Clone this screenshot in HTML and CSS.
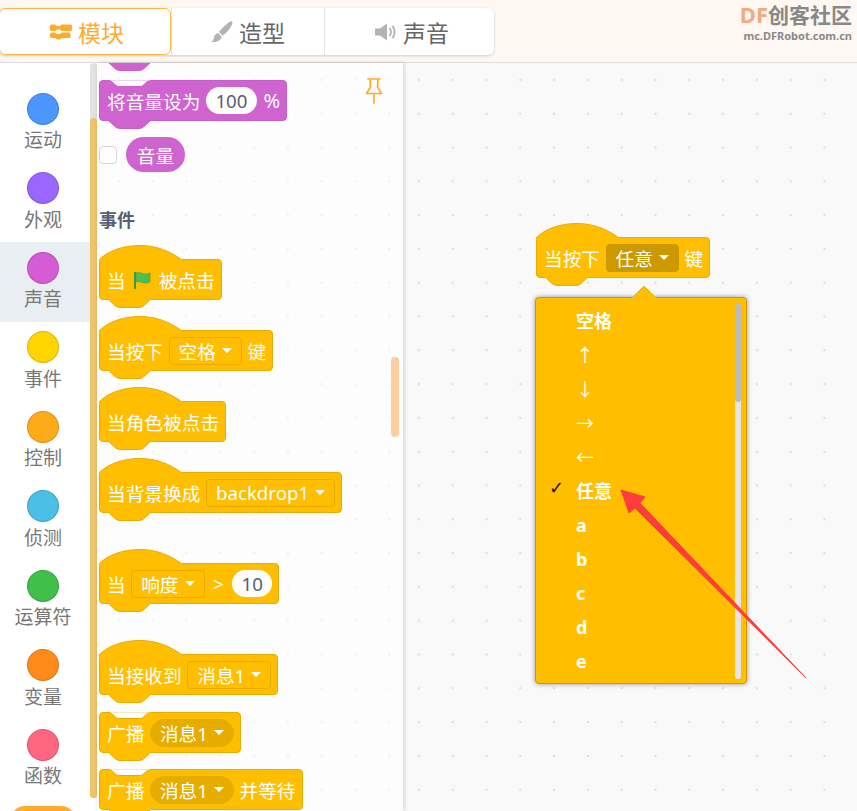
FILE: index.html
```html
<!DOCTYPE html>
<html lang="en">
<head>
    <meta charset="UTF-8">
    <meta name="viewport" content="width=device-width, initial-scale=1.0">
    <title>模块</title>
    <link rel="stylesheet" href="styles.css">
</head>
<body>
    <!-- shared block pieces -->
    <svg class="defs" width="0" height="0">
        <symbol id="hat" viewBox="0 0 84 16">
            <path d="M.5 16V14.5C9 6 24 .5 41 .5 57 .5 71 6 83 15V16Z" fill="#ffbf00" stroke="#e6ac00"/>
            <path d="M1 16V14.5H83V16Z" fill="#ffbf00"/>
        </symbol>
        <symbol id="bump" viewBox="0 0 44 9">
            <path d="M0 0 7 6.5Q9 8.5 12 8.5H31Q34 8.5 36 6.5L43 0Z" fill="#ffbf00" stroke="#e6ac00"/>
            <path d="M1 0H42V1H1Z" fill="#ffbf00"/>
        </symbol>
        <symbol id="bump-purple" viewBox="0 0 44 9">
            <path d="M0 0 7 6.5Q9 8.5 12 8.5H31Q34 8.5 36 6.5L43 0Z" fill="#cf63cf" stroke="#c85cc8"/>
            <path d="M1 0H42V1H1Z" fill="#cf63cf"/>
        </symbol>
        <symbol id="notch" viewBox="0 0 44 7">
            <path d="M0 0 6 5.5Q7 6.5 9 6.5H30Q32 6.5 33 5.5L39 0Z" fill="#fdfdfd" stroke="#e6ac00"/>
            <path d="M-1-1H40V.5H-1Z" fill="#fdfdfd"/>
        </symbol>
        <symbol id="notch-purple" viewBox="0 0 44 7">
            <path d="M0 0 6 5.5Q7 6.5 9 6.5H30Q32 6.5 33 5.5L39 0Z" fill="#fdfdfd" stroke="#c85cc8"/>
            <path d="M-1-1H40V.5H-1Z" fill="#fdfdfd"/>
        </symbol>
    </svg>

    <div class="page">
        <header class="topbar">
            <nav class="tabs">
                <div class="tab tab-active">
                    <svg class="tab-icon" viewBox="0 0 22 15"><path d="M0 1.5Q0 0 1.500 0H5L6.500 1.500H10L11.500 0H20.500Q22 0 22 1.500V5Q22 6.500 20.500 6.500H11.500L10 5H7L5.500 6.500H1.500Q0 6.500 0 5ZM1.500 8H5L6.500 9.500H10L11.500 8H19Q20.500 8 20.500 9.500V12Q20.500 13.500 19 13.500H11.500L10 15H7L5.500 13.500H1.500Q0 13.500 0 12V9.500Q0 8 1.500 8Z" fill="#ffab2e"/></svg>
                    <span>模块</span>
                </div>
                <div class="tab">
                    <svg class="tab-icon" viewBox="0 0 22 22"><path d="M21 .5C22 1 21.500 3 20 5.500 18 9 14.500 13 11.500 14.500L8 11C10 8 13.500 4.500 16.500 2.500 18.500 1 20.200 0 21 .5ZM7 12 10.500 15.500C10 19 6.500 21.500 0 21 2.500 19.500 2.500 18.500 3 16.500 3.500 14 5 12.500 7 12Z" fill="#b3b3b3"/></svg>
                    <span>造型</span>
                </div>
                <div class="tab">
                    <svg class="tab-icon" viewBox="0 0 22 17"><path d="M0 5H5L12 0V17L5 12H0Z" fill="#b3b3b3"/><path d="M15 5Q17 8.500 15 12M18 3Q21 8.500 18 14" fill="none" stroke="#b3b3b3" stroke-width="1.800" stroke-linecap="round"/></svg>
                    <span>声音</span>
                </div>
            </nav>
            <div class="logo">
                <div class="logo-name"><span class="logo-df">DF</span>创客社区</div>
                <div class="logo-url">mc.DFRobot.com.cn</div>
            </div>
        </header>

        <main class="editor">
            <aside class="categories">
                <div class="category"><i class="dot dot-motion"></i>运动</div>
                <div class="category"><i class="dot dot-looks"></i>外观</div>
                <div class="category category-on"><i class="dot dot-sound"></i>声音</div>
                <div class="category"><i class="dot dot-events"></i>事件</div>
                <div class="category"><i class="dot dot-control"></i>控制</div>
                <div class="category"><i class="dot dot-sensing"></i>侦测</div>
                <div class="category"><i class="dot dot-operators"></i>运算符</div>
                <div class="category"><i class="dot dot-variables"></i>变量</div>
                <div class="category"><i class="dot dot-functions"></i>函数</div>
                <div class="more-pill"></div>
            </aside>

            <div class="side-scroll"><div class="side-thumb"></div></div>

            <section class="flyout">
                <div class="block purple clipped">
                    <svg class="bump"><use href="#bump-purple"/></svg>
                </div>
                <div class="block purple next-block">
                    <svg class="notch"><use href="#notch-purple"/></svg>
                    将音量设为 <span class="num">100</span> <span class="percent">%</span>
                    <svg class="bump"><use href="#bump-purple"/></svg>
                </div>
                <div class="reporter-row">
                    <span class="checkbox"></span>
                    <span class="reporter">音量</span>
                </div>
                <h3 class="group-title">事件</h3>

                <div class="block hat-block first-hat">
                    <svg class="hat"><use href="#hat"/></svg>
                    当
                    <svg class="flag" viewBox="0 0 18 18"><path d="M2 1V18" stroke="#45993d" stroke-width="2"/><path d="M3 2C7 0 10 5 17 2V11C10 14 7 9 3 11Z" fill="#4cbf56" stroke="#45993d" stroke-width=".6"/></svg>
                    被点击
                    <svg class="bump"><use href="#bump"/></svg>
                </div>
                <div class="block hat-block">
                    <svg class="hat"><use href="#hat"/></svg>
                    当按下 <span class="menu">空格<i class="caret"></i></span> 键
                    <svg class="bump"><use href="#bump"/></svg>
                </div>
                <div class="block hat-block">
                    <svg class="hat"><use href="#hat"/></svg>
                    当角色被点击
                    <svg class="bump"><use href="#bump"/></svg>
                </div>
                <div class="block hat-block">
                    <svg class="hat"><use href="#hat"/></svg>
                    当背景换成 <span class="menu">backdrop1<i class="caret"></i></span>
                    <svg class="bump"><use href="#bump"/></svg>
                </div>
                <div class="block hat-block wide-gap">
                    <svg class="hat"><use href="#hat"/></svg>
                    当 <span class="menu">响度<i class="caret"></i></span> <span class="gt">&gt;</span> <span class="num num-small">10</span>
                    <svg class="bump"><use href="#bump"/></svg>
                </div>
                <div class="block hat-block wide-gap">
                    <svg class="hat"><use href="#hat"/></svg>
                    当接收到 <span class="menu">消息1<i class="caret"></i></span>
                    <svg class="bump"><use href="#bump"/></svg>
                </div>
                <div class="block next-block">
                    <svg class="notch"><use href="#notch"/></svg>
                    广播 <span class="menu menu-round">消息1<i class="caret"></i></span>
                    <svg class="bump"><use href="#bump"/></svg>
                </div>
                <div class="block next-block">
                    <svg class="notch"><use href="#notch"/></svg>
                    广播 <span class="menu menu-round">消息1<i class="caret"></i></span> 并等待
                    <svg class="bump"><use href="#bump"/></svg>
                </div>

                <svg class="pin" viewBox="0 0 18 26"><path d="M3 1H15M5 1 5.500 9 1.500 15.500H16.500L12.500 9 13 1M9 15.500V25" fill="none" stroke="#ffab2e" stroke-width="1.700" stroke-linejoin="round" stroke-linecap="round"/></svg>
                <div class="flyout-thumb"></div>
            </section>

            <section class="workspace">
                <div class="block hat-block placed">
                    <svg class="hat"><use href="#hat"/></svg>
                    当按下 <span class="menu menu-open">任意<i class="caret"></i></span> 键
                    <svg class="bump"><use href="#bump"/></svg>
                </div>

                <div class="key-menu">
                    <div class="key-list">
                        <div class="key">空格</div>
                        <div class="key key-arrow">↑</div>
                        <div class="key key-arrow">↓</div>
                        <div class="key key-arrow">→</div>
                        <div class="key key-arrow">←</div>
                        <div class="key"><span class="tick">✓</span>任意</div>
                        <div class="key">a</div>
                        <div class="key">b</div>
                        <div class="key">c</div>
                        <div class="key">d</div>
                        <div class="key">e</div>
                    </div>
                    <div class="menu-scroll"><div class="menu-thumb"></div></div>
                </div>

                <svg class="pointer" viewBox="0 0 200 200"><path d="M3 3 27 10 22 16 188 191 17 21 11 26Z" fill="#ff3d3d" stroke="#ff3d3d" stroke-width="1" stroke-linejoin="round"/></svg>
            </section>
        </main>
    </div>
</body>
</html>
```

FILE: styles.css
```css
*{
    padding: 0;
    margin: 0;
    box-sizing: border-box;
}
body{
    font-family: "Noto Sans", "Noto Sans CJK SC", sans-serif;
    overflow: hidden;
}
.defs{
    position: absolute;
}
.page{
    width: 857px;
    height: 811px;
    display: flex;
    flex-direction: column;
    overflow: hidden;
}

/* top bar */
.topbar{
    height: 63px;
    flex: none;
    background-color: #fff8f2;
    border-bottom: 1px solid #dcdcdc;
    display: flex;
    justify-content: space-between;
    padding: 8px 5px 0 0;
}
.tabs{
    display: flex;
    width: 495px;
    height: 47px;
    margin-left: -1px;
    background-color: #fff;
    border-radius: 6px;
    box-shadow: 0 1px 3px rgba(0, 0, 0, 0.18);
}
.tab{
    flex: 155px;
    display: flex;
    align-items: center;
    justify-content: center;
    gap: 6px;
    font-size: 23px;
    color: #666;
    border-left: 1px solid #e6e6e6;
}
.tab-active{
    flex: 0 0 172px;
    padding-left: 4px;
    color: #ffab2e;
    background-color: #fff;
    border: 1px solid #ffb545;
    border-radius: 6px;
}
.tab:last-child{
    flex: 0 0 170px;
    padding-left: 5px;
}
.tab-icon{
    width: 22px;
    height: 22px;
}
.logo{
    text-align: right;
    color: #888;
    font-weight: 700;
    margin-top: -7px;
}
.logo-name{
    font-size: 21px;
    line-height: 26px;
}
.logo-df{
    color: #f0ab80;
    font-size: 22px;
}
.logo-url{
    font-size: 11px;
    line-height: 15px;
}

/* category column */
.editor{
    flex: 1;
    display: flex;
    min-height: 0;
}
.categories{
    width: 90px;
    flex: none;
    background-color: #fff;
    padding-top: 20px;
    overflow: hidden;
}
.category{
    height: 79.5px;
    display: flex;
    flex-direction: column;
    align-items: center;
    padding: 9.5px 4px 0 0;
    font-size: 19px;
    line-height: 26px;
    color: #777;
}
.category-on{
    background-color: #e9eef2;
}
.dot{
    width: 32px;
    height: 32px;
    flex: none;
    border-radius: 50%;
    border: 1px solid rgba(0, 0, 0, 0.15);
    margin-bottom: 2.5px;
}
.dot-motion{ background-color: #4c97ff; }
.dot-looks{ background-color: #9966ff; }
.dot-sound{ background-color: #d65cd6; }
.dot-events{ background-color: #ffd500; }
.dot-control{ background-color: #ffab19; }
.dot-sensing{ background-color: #4cbfe6; }
.dot-operators{ background-color: #40bf4a; }
.dot-variables{ background-color: #ff8c1a; }
.dot-functions{ background-color: #ff6680; }
.more-pill{
    width: 66px;
    height: 30px;
    margin: 7px 0 0 10px;
    border-radius: 15px;
    background-color: #ffab2e;
}
.side-scroll{
    width: 7px;
    flex: none;
    background-color: #e4e2e0;
    border-radius: 4px;
    height: 735px;
}
.side-thumb{
    height: 680px;
    margin-top: 55px;
    border-radius: 4px;
    background-color: #efc36a;
}

/* block palette */
.flyout{
    width: 306px;
    flex: none;
    position: relative;
    overflow: hidden;
    padding-left: 2px;
    background-color: #fdfdfd;
    background-image: radial-gradient(circle, #f0f0f0 1px, transparent 1.2px);
    background-size: 33.8px 33.8px;
    background-position: 5px 0;
    box-shadow: 1px 0 4px rgba(0, 0, 0, 0.18);
    z-index: 1;
}
.block{
    position: relative;
    width: fit-content;
    height: 41px;
    display: flex;
    align-items: center;
    gap: 5.5px;
    padding: 0 6px 0 7px;
    font-size: 18.7px;
    color: #fff;
    white-space: nowrap;
    background-color: #ffbf00;
    border: 1px solid #e6ac00;
    border-radius: 4px;
}
.purple{
    background-color: #cf63cf;
    border-color: #c85cc8;
}
.clipped{
    width: 161px;
    margin-top: -41px;
}
.next-block{
    margin-top: 17px;
}
.hat-block{
    margin-top: 30px;
}
.first-hat{
    margin-top: 27px;
}
.wide-gap{
    margin-top: 50px;
}
.wide-gap + .next-block{
    margin-top: 17px;
}
.next-block + .next-block{
    margin-top: 16px;
}
.hat{
    position: absolute;
    left: -1px;
    top: -15px;
    width: 84px;
    height: 16px;
}
.bump{
    position: absolute;
    left: 8px;
    top: 39px;
    width: 44px;
    height: 9px;
}
.notch{
    position: absolute;
    left: 10px;
    top: -1px;
    width: 44px;
    height: 7px;
}
.num{
    height: 27px;
    min-width: 51px;
    padding: 0 8px;
    border-radius: 14px;
    background-color: #fff;
    color: #575e75;
    display: flex;
    align-items: center;
    justify-content: center;
}
.num-small{
    min-width: 40px;
}
.percent{
    margin-left: 1px;
    font-size: 20px;
}
.gt{
    margin: 0 3px;
}
.menu{
    height: 28px;
    padding: 0 9px 0 9px;
    display: flex;
    align-items: center;
    gap: 6px;
    border: 1px solid #e6ac00;
    border-radius: 4px;
}
.menu-round{
    border-radius: 14px;
    background-color: #e6ac00;
    padding: 0 9px;
}
.menu-open{
    background-color: #cc9900;
    border-color: #cc9900;
}
.caret{
    width: 0;
    height: 0;
    border: 5px solid transparent;
    border-top: 5px solid #fff;
    border-bottom: 0;
}
.flag{
    width: 18px;
    height: 18px;
    margin: 0 2px;
}
.reporter-row{
    margin-top: 16px;
    height: 35px;
    display: flex;
    align-items: center;
    gap: 9px;
}
.checkbox{
    width: 18px;
    height: 18px;
    background-color: #fff;
    border: 1px solid #d5d5d5;
    border-radius: 4px;
}
.reporter{
    width: 59px;
    height: 35px;
    border-radius: 18px;
    background-color: #cf63cf;
    color: #fff;
    font-size: 18.7px;
    display: flex;
    align-items: center;
    justify-content: center;
}
.group-title{
    margin-top: 36px;
    height: 24px;
    font-size: 18px;
    line-height: 24px;
    color: #575e75;
}
.pin{
    position: absolute;
    left: 268px;
    top: 15px;
    width: 18px;
    height: 26px;
}
.flyout-thumb{
    position: absolute;
    left: 294px;
    top: 294px;
    width: 8px;
    height: 80px;
    border-radius: 4px;
    background-color: #fdcf9e;
}

/* script area */
.workspace{
    flex: 1;
    position: relative;
    background-color: #f9f9f9;
    background-image: radial-gradient(circle, #dedede 1px, transparent 1.2px);
    background-size: 33.8px 33.8px;
    background-position: -1px 0;
}
.placed{
    position: absolute;
    left: 133px;
    top: 174px;
    margin: 0;
}
.key-menu{
    position: absolute;
    left: 132px;
    top: 234px;
    width: 212px;
    height: 387px;
    padding: 6px 5px 4px 0;
    display: flex;
    background-color: #ffbf00;
    border: 1px solid #cc9900;
    border-radius: 4px;
    box-shadow: 0 0 5px rgba(0, 0, 0, 0.4);
    font-size: 18px;
    color: #fff;
}
.key-menu::before{
    content: "";
    position: absolute;
    left: 99px;
    top: -9px;
    width: 17px;
    height: 17px;
    transform: rotate(45deg);
    background-color: #ffbf00;
    border-top: 1px solid #e6ac00;
    border-left: 1px solid #e6ac00;
    border-top-left-radius: 2px;
}
.key-list{
    position: relative;
    flex: 1;
}
.key{
    position: relative;
    height: 34px;
    line-height: 34px;
    padding-left: 40px;
    font-weight: 700;
}
.key-arrow{
    font-weight: 400;
    line-height: 32px;
    font-family: "Noto Sans CJK SC", sans-serif;
}
.tick{
    position: absolute;
    left: 13px;
    top: -3px;
    color: #111;
    font-weight: 700;
    font-size: 18px;
    font-family: "DejaVu Sans", sans-serif;
}
.menu-scroll{
    width: 6px;
    background-color: #e6e6e6;
    border-radius: 3px;
}
.menu-thumb{
    height: 98px;
    border-radius: 3px;
    background-color: #bbb;
}
.pointer{
    position: absolute;
    left: 215px;
    top: 424px;
    width: 200px;
    height: 200px;
    z-index: 2;
}
```
